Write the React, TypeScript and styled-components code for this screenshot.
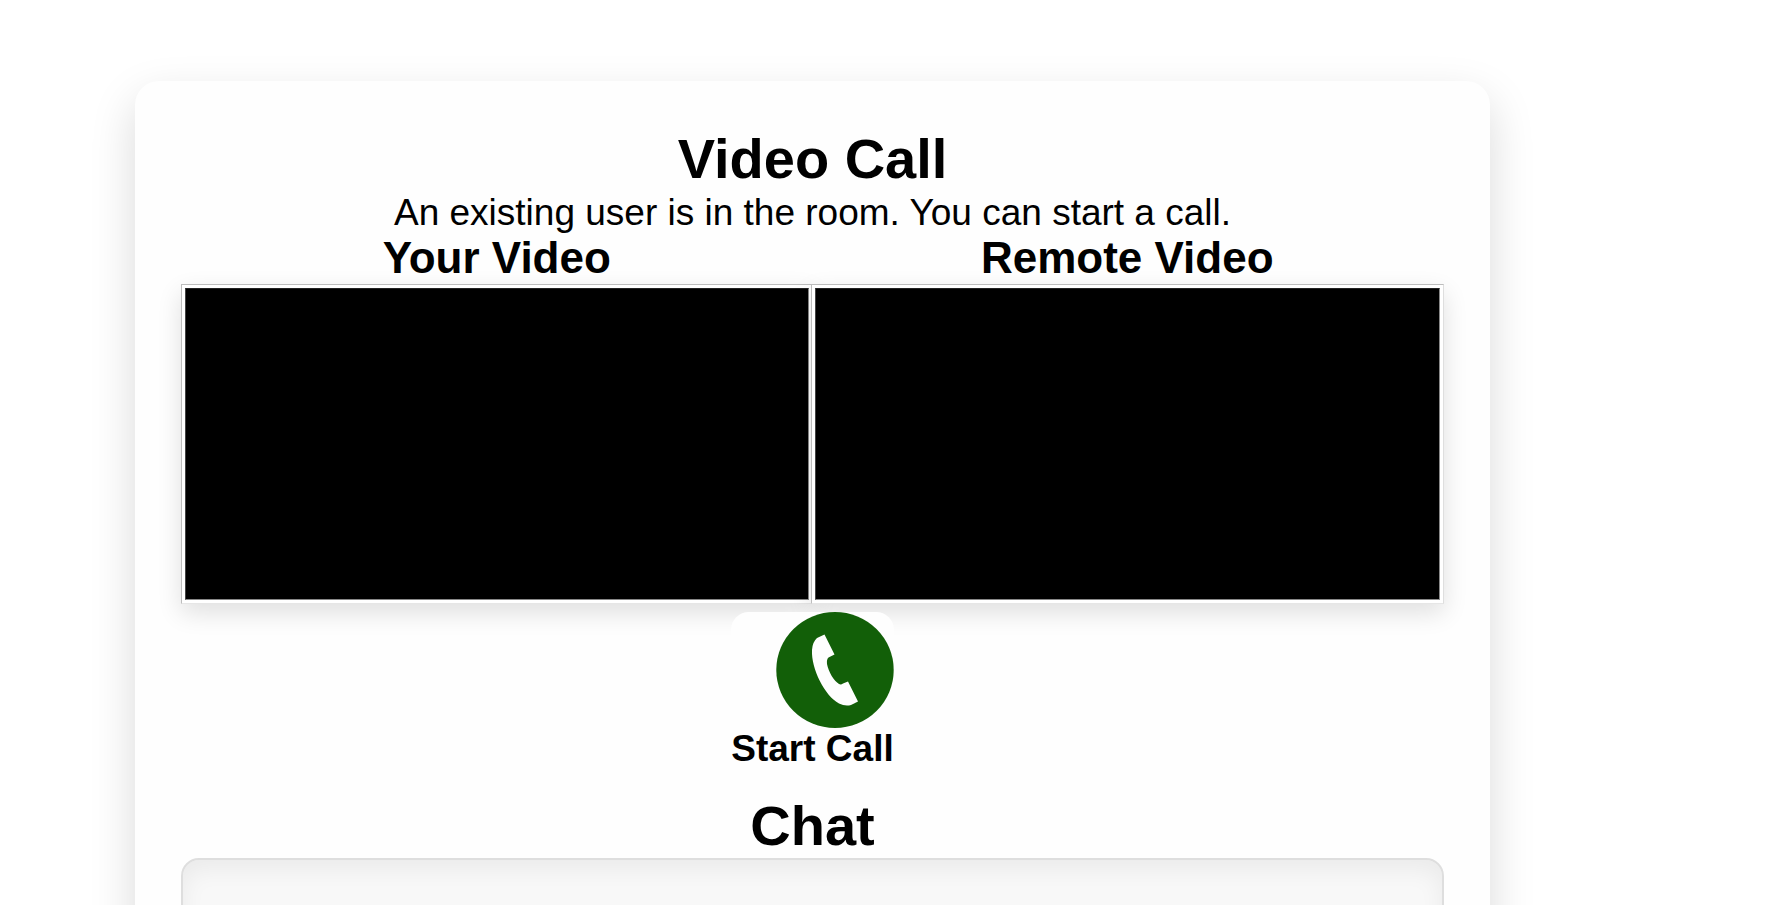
import React from "react";
import styled, { createGlobalStyle } from "styled-components";

const GlobalStyle = createGlobalStyle`
  *, *::before, *::after { box-sizing: border-box; }
  body {
    margin: 0;
    background: #fff;
    color: #000;
    font-family: Arial, "Liberation Sans", sans-serif;
    font-size: 37px;
    line-height: 43px;
  }
`;

const Page = styled.div`
  padding: 81px 287px 81px 135px;
`;

const Card = styled.main`
  display: flex;
  flex-direction: column;
  align-items: center;
  padding: 46px;
  border-radius: 24px;
  background: #fefefe;
  box-shadow: 0 18px 46px rgba(0, 0, 0, 0.15);
  text-align: center;
`;

const Title = styled.h1`
  margin: 0;
  font-size: 56px;
  line-height: 64px;
`;

const Status = styled.p`
  margin: 0;
`;

const Videos = styled.section`
  display: grid;
  grid-template-columns: 1fr 1fr;
  width: 100%;
`;

const VideoPane = styled.div`
  display: flex;
  flex-direction: column;

  & + & {
    margin-left: -2px;
  }
`;

const VideoTitle = styled.h2`
  margin: 0;
  padding-bottom: 2px;
  font-size: 44px;
  line-height: 48px;
`;

const VideoFrame = styled.div`
  padding: 3px;
  border: 1px solid;
  border-color: #bdbdbd #dedede #e6e6e6 #bdbdbd;
  background: #fff;
  box-shadow: 0 9px 23px rgba(0, 0, 0, 0.12);
`;

const Screen = styled.video`
  display: block;
  width: 100%;
  height: 312px;
  border: 1px solid;
  border-color: #222 #888 #888 #444;
  background: #000;
`;

const CallButton = styled.button`
  position: relative;
  display: flex;
  flex-direction: column;
  align-items: flex-end;
  margin: 8px 0 24px;
  padding: 0;
  border: 0;
  border-radius: 18px;
  background: #fefefe;
  color: #000;
  font: inherit;
  font-weight: bold;
  line-height: 42px;
  cursor: pointer;
`;

const CallIcon = styled.svg`
  display: block;
  width: 118px;
  height: 116px;
`;

const ChatLog = styled.div`
  width: 100%;
  min-height: 460px;
  border: 2px solid #dedede;
  border-radius: 18px;
  background: #f8f8f8;
  box-shadow: inset 0 9px 23px rgba(0, 0, 0, 0.06);
`;

const panes = ["Your Video", "Remote Video"];

export default function App() {
  return (
    <>
      <GlobalStyle />
      <Page>
        <Card>
          <Title>Video Call</Title>
          <Status>An existing user is in the room. You can start a call.</Status>
          <Videos>
            {panes.map((name) => (
              <VideoPane key={name}>
                <VideoTitle>{name}</VideoTitle>
                <VideoFrame>
                  <Screen aria-label={name} />
                </VideoFrame>
              </VideoPane>
            ))}
          </Videos>
          <CallButton type="button">
            <CallIcon viewBox="0 0 118 116" aria-hidden="true">
              <ellipse cx="59" cy="58" rx="58.7" ry="58" fill="#125f08" />
              <path
                d="M48.5 22.5 L58.5 42.5 L52.5 45.5 Q50.5 47 51 52 C52.5 60 58 69 63 72 Q65 73 67 71.5 L72 69.5 L82 89.5 L75 93 Q69 94.5 63 91.5 C49 84 35 57 36 38 Q36.500 30 41 26 Z"
                fill="#fefefe"
              />
            </CallIcon>
            <span>Start Call</span>
          </CallButton>
          <Title as="h2">Chat</Title>
          <ChatLog role="log" aria-label="Chat" />
        </Card>
      </Page>
    </>
  );
}
